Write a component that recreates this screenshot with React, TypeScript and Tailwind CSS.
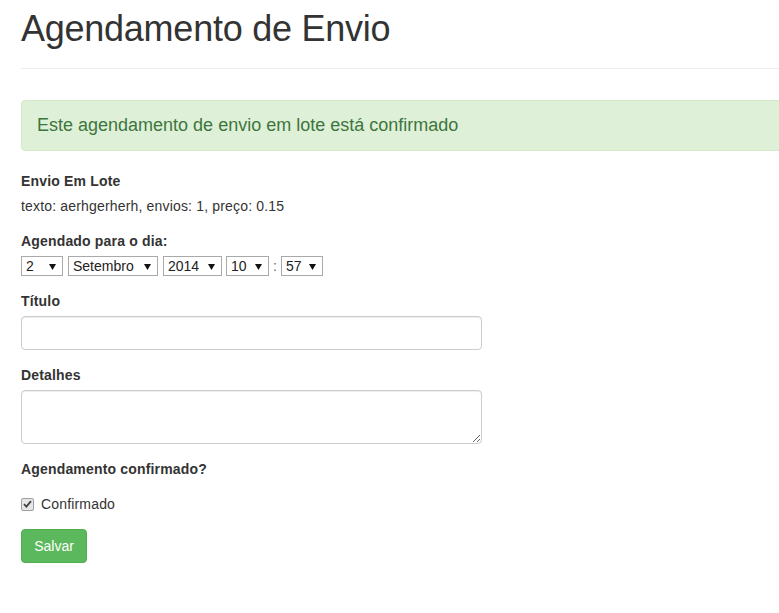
import React from 'react';

const selects = [
  { value: '2', width: 'w-[42px]', margin: '' },
  { value: 'Setembro', width: 'w-[90px]', margin: 'ml-[5px]' },
  { value: '2014', width: 'w-[59px]', margin: 'ml-[5px]' },
  { value: '10', width: 'w-[43px]', margin: 'ml-[4px]' },
];

function FakeSelect({ value, className }: { value: string; className: string }) {
  return (
    <div className={`relative flex h-[20px] items-center border border-[#a9a9a9] bg-white pl-[4px] text-[14px] leading-[18px] text-[#222] ${className}`}>
      <span>{value}</span>
      <svg className="absolute right-[6px] top-[7px]" width="7" height="6" viewBox="0 0 7 6">
        <path d="M0 0 H7 L3.5 6 Z" fill="#111" />
      </svg>
    </div>
  );
}

export default function App() {
  return (
    <div className="min-h-screen overflow-hidden bg-white font-['Liberation_Sans',Arial,sans-serif] text-[14px] leading-[20px] text-[#333]">
      <div className="ml-[21px] w-[1100px]">
        <div className="border-b border-[#eee] pb-[20px]">
          <h1 className="mt-[9px] text-[36px] leading-[39px] font-normal tracking-[-0.25px]">Agendamento de Envio</h1>
        </div>

        <div className="mt-[31px] mb-[20px] rounded-[4px] border border-[#d6e9c6] bg-[#dff0d8] px-[15px] text-[18px] leading-[49px] text-[#3c763d]">
          Este agendamento de envio em lote está confirmado
        </div>

        <div className="w-[461px] tracking-[0.17px]">
          <div className="mb-[15px]">
            <label className="mb-[5px] inline-block font-bold">Envio Em Lote</label>
            <p>texto: aerhgerherh, envios: 1, preço: 0.15</p>
          </div>

          <div className="mb-[15px]">
            <label className="mb-[5px] inline-block font-bold">Agendado para o dia:</label>
            <div className="flex items-center tracking-normal">
              {selects.map((s) => (
                <FakeSelect key={s.value} value={s.value} className={`${s.width} ${s.margin}`} />
              ))}
              <span className="mx-[4px] w-[4px] text-center text-[#666]">:</span>
              <FakeSelect value="57" className="w-[42px]" />
            </div>
          </div>

          <div className="mb-[15px]">
            <label className="mb-[5px] inline-block font-bold">Título</label>
            <input
              type="text"
              className="block h-[34px] w-full rounded-[4px] border border-[#ccc] px-[12px] py-[6px] shadow-[inset_0_1px_1px_rgba(0,0,0,0.075)] outline-none"
            />
          </div>

          <div className="mb-[15px]">
            <label className="mb-[5px] inline-block font-bold">Detalhes</label>
            <textarea
              rows={2}
              className="block h-[54px] w-full rounded-[4px] border border-[#ccc] px-[12px] py-[6px] shadow-[inset_0_1px_1px_rgba(0,0,0,0.075)] outline-none"
            />
          </div>

          <div>
            <label className="mb-[5px] inline-block font-bold">Agendamento confirmado?</label>
            <div className="mt-[10px] flex h-[20px] items-center">
              <span className="flex h-[13px] w-[13px] items-center justify-center rounded-[2px] border border-[#a0a0a0] bg-[#e6e6e6]">
                <svg width="9" height="8" viewBox="0 0 9 8">
                  <path d="M1 4.2 L3.4 6.6 L8 1.2" fill="none" stroke="#444" strokeWidth="1.8" />
                </svg>
              </span>
              <span className="ml-[7px]">Confirmado</span>
            </div>
          </div>

          <button className="mt-[15px] h-[34px] w-[66px] rounded-[4px] border border-[#4cae4c] bg-[#5cb85c] text-[14px] tracking-normal text-white">
            Salvar
          </button>
        </div>
      </div>
    </div>
  );
}
